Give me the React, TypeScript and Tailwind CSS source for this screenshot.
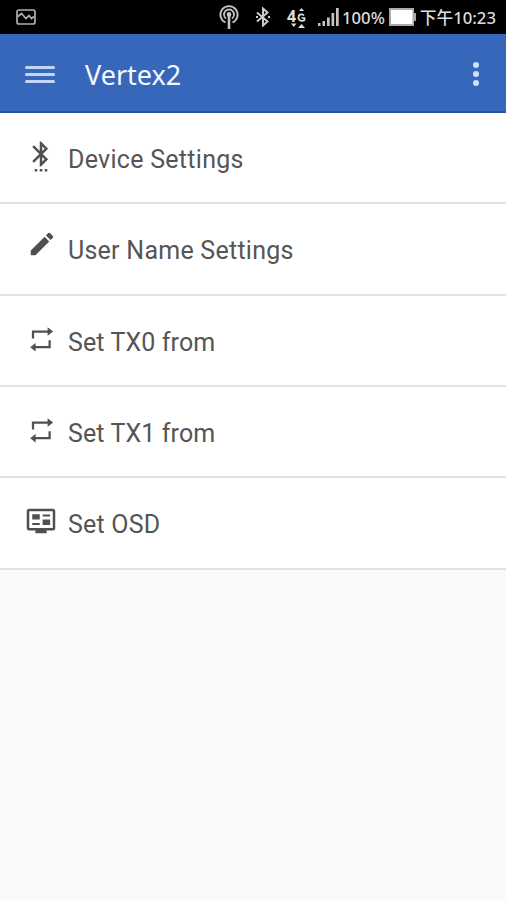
import { ReactNode } from 'react'

const icons: Record<string, ReactNode> = {
  bluetooth: (
    <path d="M11 24h2v-2h-2v2zm-4 0h2v-2H7v2zm8 0h2v-2h-2v2zm2.71-18.29L12 0h-1v7.59L6.41 3 5 4.41 10.59 10 5 15.59 6.41 17 11 12.41V20h1l5.71-5.71-4.3-4.29 4.3-4.29zM13 3.83l1.88 1.88L13 7.59V3.83zm1.88 10.46L13 16.17v-3.76l1.88 1.88z" />
  ),
  edit: (
    <path d="M3 17.25V21h3.75L17.81 9.94l-3.75-3.75L3 17.25zM20.71 7.04c.39-.39.39-1.02 0-1.41l-2.34-2.34a.996.996 0 0 0-1.41 0l-1.83 1.83 3.75 3.75 1.83-1.83z" />
  ),
  repeat: (
    <path d="M4.700 4.300H17.300V1.800L21.700 5.200l-4.400 3.400V6.100H6.500v4.700H4.700zM19.800 18.600H7.700v2.500L3.300 17.700l4.400-3.400v2.500H18v-4.600h1.800z" />
  ),
  osd: (
    <path
      fillRule="evenodd"
      d="M2.600 2.200h18.800A2 2 0 0 1 23.400 4.200v13.400a2 2 0 0 1-2 2H16.500v2.200h-9v-2.200H2.600a2 2 0 0 1-2-2V4.200A2 2 0 0 1 2.600 2.200zM2.600 4.200v13.400h18.800V4.200zM5 6.600h6v4.200H5zM13.300 6.800h6v1.600h-6zM5 13.500h6v1.600H5zM13.300 10.800h6v4.400h-6z"
    />
  )
}

const menu = [
  {
    name: 'Device Settings',
    icon: 'bluetooth',
    iconClass: 'mt-[28px] ml-[26px] h-[31px] w-[30px]',
    textClass: 'tracking-[0.28px]'
  },
  {
    name: 'User Name Settings',
    icon: 'edit',
    iconClass: 'mt-[25px] ml-[27px] h-[30px] w-[30px]',
    textClass: 'tracking-[0.25px]'
  },
  {
    name: 'Set TX0 from',
    icon: 'repeat',
    iconClass: 'mt-[29px] ml-[26px] h-[30px] w-[30px]',
    textClass: 'tracking-[0.12px]'
  },
  {
    name: 'Set TX1 from',
    icon: 'repeat',
    iconClass: 'mt-[29px] ml-[26px] h-[30px] w-[30px]',
    textClass: 'tracking-[0.12px]'
  },
  {
    name: 'Set OSD',
    icon: 'osd',
    iconClass: 'mt-[28px] ml-[26px] h-[30px] w-[30px]',
    textClass: 'tracking-[0.2px]'
  }
]

function StatusBar() {
  return (
    <div className="flex h-[34px] items-center bg-black text-[#dcdcdc]">
      <svg className="ml-4 h-4 w-5" viewBox="0 0 20 16" fill="none" stroke="#b0b0b0" strokeWidth="1.700">
        <rect x="1" y="1" width="18" height="14" rx="2" />
        <path d="M2 7.500l3.500-3 4.500 5 3-3 2.500 3 2.500-2" />
      </svg>
      <svg className="ml-[182px] h-[26px] w-[22px]" viewBox="0 0 22 26" fill="none" stroke="#c4c4c4" strokeWidth="1.800">
        <path d="M7.500 18.500a8.600 8.600 0 1 1 7 0" />
        <path d="M8 14.500a5 5 0 1 1 6 0" />
        <circle cx="11" cy="10.500" r="1.500" fill="#ddd" />
        <path d="M11 11v14" strokeWidth="2.600" />
      </svg>
      <svg className="ml-[15px] h-5 w-4" viewBox="0 0 16 20" fill="none" stroke="#ccc" strokeWidth="2">
        <path d="M2 5.500l10.500 9L8 18.500v-17l4.500 4-10.500 9" />
        <path d="M1 10h2M13 10h2" />
      </svg>
      <div className="mt-[2px] ml-4 flex h-5 w-[22px]">
        <span className="font-['Noto_Sans',sans-serif] text-[16px] leading-[17px] font-bold">4</span>
        <svg className="h-5 w-[11px] shrink-0" viewBox="0 0 11 20" fill="#ddd">
          <path d="M5.500 0l2.500 3H3zM5.500 16l3.500 4H2z" />
          <path d="M8 7.500C6.500 5.500 2.500 6 2.500 9.500s4 4.200 6 2.500V10H5.500" fill="none" stroke="#ddd" strokeWidth="1.700" />
        </svg>
        <svg className="-ml-4 h-5 w-2 shrink-0" viewBox="0 0 8 20" fill="#ddd">
          <path d="M0 15.500h5.500L2.750 19z" />
        </svg>
      </div>
      <svg className="ml-[9px] h-5 w-[22px]" viewBox="0 0 22 20" fill="#c4c4c4">
        <path d="M0 16h2.500v3H0zM4.500 14H7v5H4.500zM9 10.500h2.700V19H9zM13.500 6h2.700v13h-2.700zM18 1h2.700v18H18z" />
      </svg>
      <span className="mt-[2px] ml-[2px] font-['Noto_Sans',sans-serif] text-[16.700px] font-medium">100%</span>
      <svg className="ml-[4px] h-[18px] w-[28px]" viewBox="0 0 28 18">
        <path d="M0 0h25v5h2v8h-2v5H0z" fill="#aaa" />
        <path d="M2 2h21.500v14H2z" fill="#fff" />
      </svg>
      <span className="mt-[2px] ml-[3px] font-['Noto_Sans','Noto_Sans_CJK_TC',sans-serif] text-[16.700px] font-medium whitespace-nowrap">
        下午10:23
      </span>
    </div>
  )
}

export default function App() {
  return (
    <div className="h-[900px] w-[506px] overflow-hidden bg-[#fafafa]">
      <StatusBar />
      <header className="flex h-[79px] items-center border-b-2 border-[#2453a5] bg-[#3767bb]">
        <div className="mt-[3px] ml-[25px] flex w-[30px] flex-col gap-1">
          <span className="h-[3px] rounded-full bg-[#c3d6f5]" />
          <span className="h-[3px] rounded-full bg-[#c3d6f5]" />
          <span className="h-[3px] rounded-full bg-[#c3d6f5]" />
        </div>
        <h1 className="mt-[5px] ml-[30px] font-['Noto_Sans',sans-serif] text-[27px] leading-[30px] text-[#f3f8ff]">
          Vertex2
        </h1>
        <div className="mt-[2px] mr-[27px] ml-auto flex flex-col gap-[3px]">
          <span className="h-1.5 w-1.5 rounded-full bg-[#cfe0fb]" />
          <span className="h-1.5 w-1.5 rounded-full bg-[#cfe0fb]" />
          <span className="h-1.5 w-1.5 rounded-full bg-[#cfe0fb]" />
        </div>
      </header>
      <ul>
        {menu.map((item) => (
          <li key={item.name} className="flex h-[91.350px] items-start border-b-2 border-[#e2e2e2] bg-white">
            <div className="w-[68px] shrink-0">
              <svg className={item.iconClass} viewBox="0 0 24 24" fill="#505050">
                {icons[item.icon]}
              </svg>
            </div>
            <span
              className={`mt-[32px] font-['Roboto',sans-serif] text-[25px] leading-[30px] text-[#555] ${item.textClass}`}
            >
              {item.name}
            </span>
          </li>
        ))}
      </ul>
    </div>
  )
}
